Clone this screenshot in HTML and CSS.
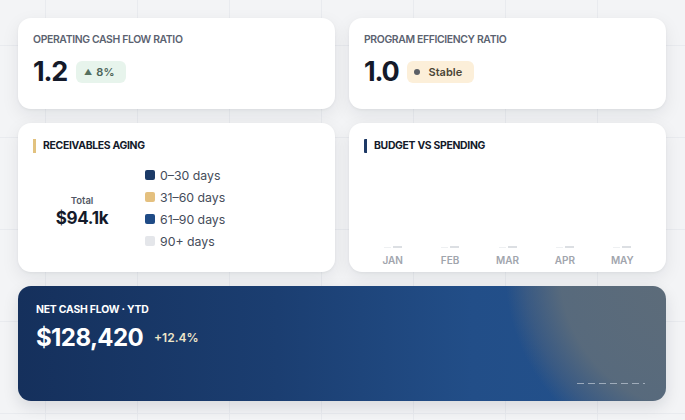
FILE: index.html
```html
<!DOCTYPE html>
<html lang="en">
<head>
    <meta charset="UTF-8">
    <title>Finance Dashboard</title>
    <link rel="stylesheet" href="styles.css">
</head>
<body>
    <div class="dashboard">
        <!-- KPI cards -->
        <div class="card kpi">
            <div class="kpi-label">Operating Cash Flow Ratio</div>
            <div class="kpi-row">
                <span class="kpi-value">1.2</span>
                <span class="badge badge-up"><span class="tri">&#9650;</span>8%</span>
            </div>
        </div>
        <div class="card kpi">
            <div class="kpi-label">Program Efficiency Ratio</div>
            <div class="kpi-row">
                <span class="kpi-value">1.0</span>
                <span class="badge badge-flat"><span class="dot"></span>Stable</span>
            </div>
        </div>

        <!-- Receivables -->
        <div class="card panel">
            <div class="panel-title gold">Receivables Aging</div>
            <div class="aging">
                <div class="aging-total">
                    <div class="total-label">Total</div>
                    <div class="total-value">$94.1k</div>
                </div>
                <ul class="legend">
                    <li><span class="swatch navy"></span>0–30 days</li>
                    <li><span class="swatch sand"></span>31–60 days</li>
                    <li><span class="swatch blue"></span>61–90 days</li>
                    <li><span class="swatch grey"></span>90+ days</li>
                </ul>
            </div>
        </div>

        <!-- Budget vs spending -->
        <div class="card panel">
            <div class="panel-title navybar">Budget vs Spending</div>
            <div class="chart">
                <div class="month"><div class="bars"><span class="bar b1"></span><span class="bar b2"></span></div><span>Jan</span></div>
                <div class="month"><div class="bars"><span class="bar b1"></span><span class="bar b2"></span></div><span>Feb</span></div>
                <div class="month"><div class="bars"><span class="bar b1"></span><span class="bar b2"></span></div><span>Mar</span></div>
                <div class="month"><div class="bars"><span class="bar b1"></span><span class="bar b2"></span></div><span>Apr</span></div>
                <div class="month"><div class="bars"><span class="bar b1"></span><span class="bar b2"></span></div><span>May</span></div>
            </div>
        </div>

        <!-- Net cash flow banner -->
        <div class="banner">
            <div class="banner-label">Net Cash Flow · YTD</div>
            <div class="banner-row">
                <span class="banner-value">$128,420</span>
                <span class="banner-change">+12.4%</span>
            </div>
            <div class="dashes"></div>
        </div>
    </div>
</body>
</html>
```

FILE: styles.css
```css
/* Base */
body {
    margin: 0;
    font-family: Inter, "Noto Sans", sans-serif;
    background-color: #f3f4f6;
    background-image:
        linear-gradient(to right, #e9ebef 1px, transparent 1px),
        linear-gradient(to bottom, #e9ebef 1px, transparent 1px);
    background-size: 92px 92px;
    background-position: 45px 45px;
    color: #111827;
}

.dashboard {
    display: grid;
    grid-template-columns: 317px 317px;
    gap: 14px;
    padding: 18px;
}

.card {
    background: #fff;
    border-radius: 13px;
    box-shadow: 0 6px 18px rgba(17, 24, 39, 0.08), 0 1px 3px rgba(17, 24, 39, 0.05);
}

/* KPI cards */
.kpi {
    height: 91px;
    box-sizing: border-box;
    padding: 15px 15px 0;
}

.kpi-label {
    font-size: 10.4px;
    font-weight: 600;
    text-transform: uppercase;
    color: #5b6270;
    letter-spacing: -0.35px;
}

.kpi-row {
    display: flex;
    align-items: center;
    gap: 9px;
    margin-top: 9px;
}

.kpi-value {
    font-size: 27px;
    font-weight: 700;
    color: #141a2a;
    letter-spacing: -1.2px;
}

.badge {
    display: inline-flex;
    align-items: center;
    height: 22px;
    padding: 0 12px 0 8px;
    border-radius: 6px;
    font-size: 11px;
    font-weight: 600;
}

.badge-up {
    background: #e7f4ec;
    color: #4c6358;
}

.tri {
    font-size: 8px;
    color: #56705f;
    margin-right: 4px;
}

.badge-flat {
    background: #fcefd9;
    color: #4a4536;
    padding: 0 12px 0 7px;
}

.dot {
    width: 6px;
    height: 6px;
    border-radius: 50%;
    background: #5b5f66;
    margin-right: 8px;
}

/* Panels */
.panel {
    height: 149px;
    box-sizing: border-box;
    padding: 16px 15px 0;
}

.panel-title {
    font-size: 10.4px;
    font-weight: 700;
    text-transform: uppercase;
    color: #141a2a;
    padding-left: 7px;
    border-left: 3px solid #e2c27f;
    line-height: 14px;
    letter-spacing: -0.3px;
}

.panel-title.navybar {
    border-left-color: #1e3a66;
    border-radius: 1px;
}

.aging {
    display: flex;
    align-items: center;
    margin-top: 11px;
}

.aging-total {
    width: 98px;
    text-align: center;
    padding-top: 6px;
}

.total-label {
    font-size: 9.5px;
    font-weight: 600;
    color: #525866;
}

.total-value {
    font-size: 17px;
    font-weight: 700;
    color: #141a2a;
    margin-top: 2px;
    letter-spacing: -0.3px;
}

.legend {
    list-style: none;
    margin: 0 0 0 14px;
    padding: 0;
}

.legend li {
    display: flex;
    align-items: center;
    height: 22px;
    font-size: 12.3px;
    color: #454c5a;
}

.swatch {
    width: 10px;
    height: 10px;
    border-radius: 2px;
    margin-right: 5px;
}

.swatch.navy { background: #1b3a67; }
.swatch.sand { background: #e4c07f; }
.swatch.blue { background: #1f4b86; }
.swatch.grey { background: #e4e6ea; }

/* Bar chart */
.chart {
    display: flex;
    margin-top: 93px;
}

.month {
    flex: 1;
    display: flex;
    flex-direction: column;
    align-items: center;
    font-size: 10px;
    font-weight: 600;
    text-transform: uppercase;
    color: #a1a5ad;
}

.bars {
    display: flex;
    align-items: flex-end;
    gap: 2px;
    height: 2px;
    margin-bottom: 6px;
}

.bar {
    width: 7px;
    height: 1px;
    background: #eef0f2;
}

.bar.b2 {
    width: 9px;
    height: 2px;
    background: #dcdfe3;
}

/* Banner */
.banner {
    grid-column: 1 / span 2;
    position: relative;
    height: 115px;
    box-sizing: border-box;
    padding: 17px 18px 0;
    border-radius: 13px;
    color: #fff;
    background:
        radial-gradient(circle at 682px -16px, rgba(96, 109, 120, 0.97) 0, rgba(92, 108, 123, 0.92) 140px, rgba(80, 100, 125, 0.5) 175px, rgba(40, 80, 130, 0) 195px),
        linear-gradient(to right, #15305c 0%, #1b3e71 40%, #224e88 70%, #23528d 100%);
    box-shadow: 0 6px 16px rgba(17, 24, 39, 0.12);
    overflow: hidden;
}

.banner-label {
    font-size: 10.4px;
    font-weight: 700;
    text-transform: uppercase;
    letter-spacing: -0.2px;
}

.banner-row {
    display: flex;
    align-items: center;
    gap: 11px;
    margin-top: 7px;
}

.banner-value {
    font-size: 24px;
    font-weight: 700;
    letter-spacing: -0.6px;
}

.banner-change {
    font-size: 12px;
    font-weight: 600;
    color: #efe6c9;
}

.dashes {
    position: absolute;
    right: 21px;
    bottom: 17px;
    width: 68px;
    height: 1px;
    background: repeating-linear-gradient(to right, rgba(190, 200, 212, 0.7) 0 7px, transparent 7px 11px);
}
```
